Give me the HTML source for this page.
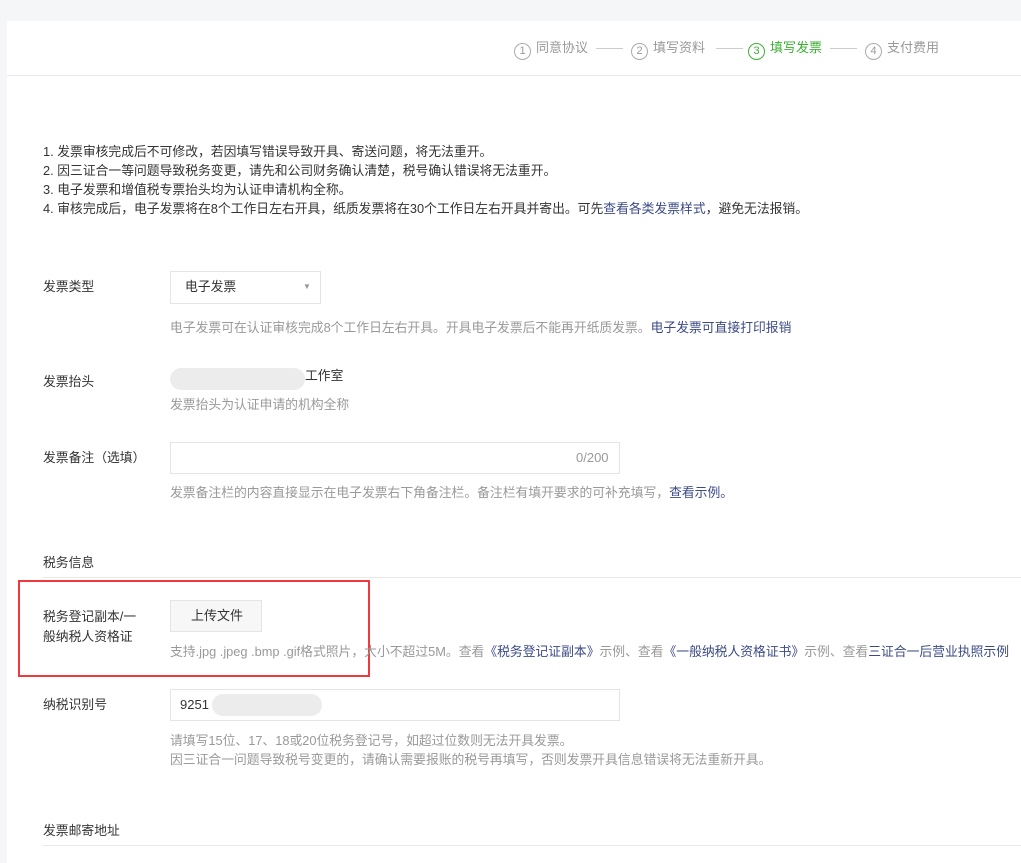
<!DOCTYPE html><html><head><meta charset="utf-8"><style>
body{margin:0;width:1021px;height:863px;background:#f5f6f8;font-family:"Liberation Sans","Noto Sans CJK SC",sans-serif;font-size:12.8px;color:#333;position:relative;overflow:hidden}
.card{position:absolute;left:7px;top:21px;width:1014px;height:842px;background:#fff}
.a{position:absolute;white-space:nowrap;line-height:18px}
.g{color:#999}.l{color:#3b4a86}
.box{position:absolute;border:1px solid #e4e4e4;background:#fff;box-sizing:border-box}
.hr{position:absolute;height:1px;background:#e8e8e8}
.c{display:inline-block;width:15px;height:15px;border:1px solid #aaa;border-radius:50%;text-align:center;line-height:15px;font-size:11px;margin-right:5px;vertical-align:-2px}
.st{color:#999;font-size:13px}
.dash{position:absolute;height:1px;background:#ccc;width:27px;top:48px}
</style></head><body>
<div class="card"></div>
<div class="hr" style="left:7px;top:75px;width:1014px"></div>
<div class="a st" style="left:514px;top:39px"><span class="c">1</span>同意协议</div>
<div class="dash" style="left:596px"></div>
<div class="a st" style="left:631px;top:39px"><span class="c">2</span>填写资料</div>
<div class="dash" style="left:716px"></div>
<div class="a st" style="left:748px;top:39px;color:#3cb034"><span class="c" style="border-color:#3cb034">3</span>填写发票</div>
<div class="dash" style="left:830px"></div>
<div class="a st" style="left:865px;top:39px"><span class="c">4</span>支付费用</div>

<div class="a" style="left:43px;top:143px">1. 发票审核完成后不可修改，若因填写错误导致开具、寄送问题，将无法重开。</div>
<div class="a" style="left:43px;top:162px">2. 因三证合一等问题导致税务变更，请先和公司财务确认清楚，税号确认错误将无法重开。</div>
<div class="a" style="left:43px;top:181px">3. 电子发票和增值税专票抬头均为认证申请机构全称。</div>
<div class="a" style="left:43px;top:200px">4. 审核完成后，电子发票将在8个工作日左右开具，纸质发票将在30个工作日左右开具并寄出。可先<span class="l">查看各类发票样式</span>，避免无法报销。</div>

<div class="a" style="left:43px;top:278px">发票类型</div>
<div class="box" style="left:170px;top:271px;width:151px;height:33px"></div>
<div class="a" style="left:185px;top:278px">电子发票</div>
<div class="a g" style="left:303px;top:278px;font-size:8px">▼</div>
<div class="a g" style="left:170px;top:319px">电子发票可在认证审核完成8个工作日左右开具。开具电子发票后不能再开纸质发票。<span class="l">电子发票可直接打印报销</span></div>

<div class="a" style="left:43px;top:373px">发票抬头</div>
<div style="position:absolute;left:170px;top:368px;width:135px;height:22px;background:#ececec;border-radius:11px"></div>
<div class="a" style="left:305px;top:367px">工作室</div>
<div class="a g" style="left:170px;top:396px">发票抬头为认证申请的机构全称</div>

<div class="a" style="left:43px;top:449px">发票备注（选填）</div>
<div class="box" style="left:170px;top:442px;width:450px;height:32px"></div>
<div class="a g" style="left:576px;top:449px;font-size:13px">0/200</div>
<div class="a g" style="left:170px;top:484px">发票备注栏的内容直接显示在电子发票右下角备注栏。备注栏有填开要求的可补充填写，<span class="l">查看示例。</span></div>

<div class="a" style="left:43px;top:554px">税务信息</div>
<div class="hr" style="left:43px;top:577px;width:978px"></div>
<div style="position:absolute;left:18px;top:580px;width:348px;height:93px;border:2px solid #f0393e"></div>
<div class="a" style="left:43px;top:607px;line-height:20px">税务登记副本/一<br>般纳税人资格证</div>
<div class="box" style="left:170px;top:600px;width:92px;height:32px;background:#f7f7f7"></div>
<div class="a" style="left:191px;top:607px;font-size:13px">上传文件</div>
<div class="a g" style="left:170px;top:643px">支持.jpg .jpeg .bmp .gif格式照片，大小不超过5M。查看<span class="l">《税务登记证副本》</span>示例、查看<span class="l">《一般纳税人资格证书》</span>示例、查看<span class="l">三证合一后营业执照示例</span></div>

<div class="a" style="left:43px;top:696px">纳税识别号</div>
<div class="box" style="left:170px;top:689px;width:450px;height:32px"></div>
<div class="a" style="left:180px;top:696px;font-size:13px">9251</div>
<div style="position:absolute;left:212px;top:694px;width:110px;height:22px;background:#ececec;border-radius:11px"></div>
<div class="a g" style="left:170px;top:732px">请填写15位、17、18或20位税务登记号，如超过位数则无法开具发票。</div>
<div class="a g" style="left:170px;top:751px">因三证合一问题导致税号变更的，请确认需要报账的税号再填写，否则发票开具信息错误将无法重新开具。</div>

<div class="a" style="left:43px;top:822px">发票邮寄地址</div>
<div class="hr" style="left:43px;top:845px;width:978px"></div>
</body></html>
